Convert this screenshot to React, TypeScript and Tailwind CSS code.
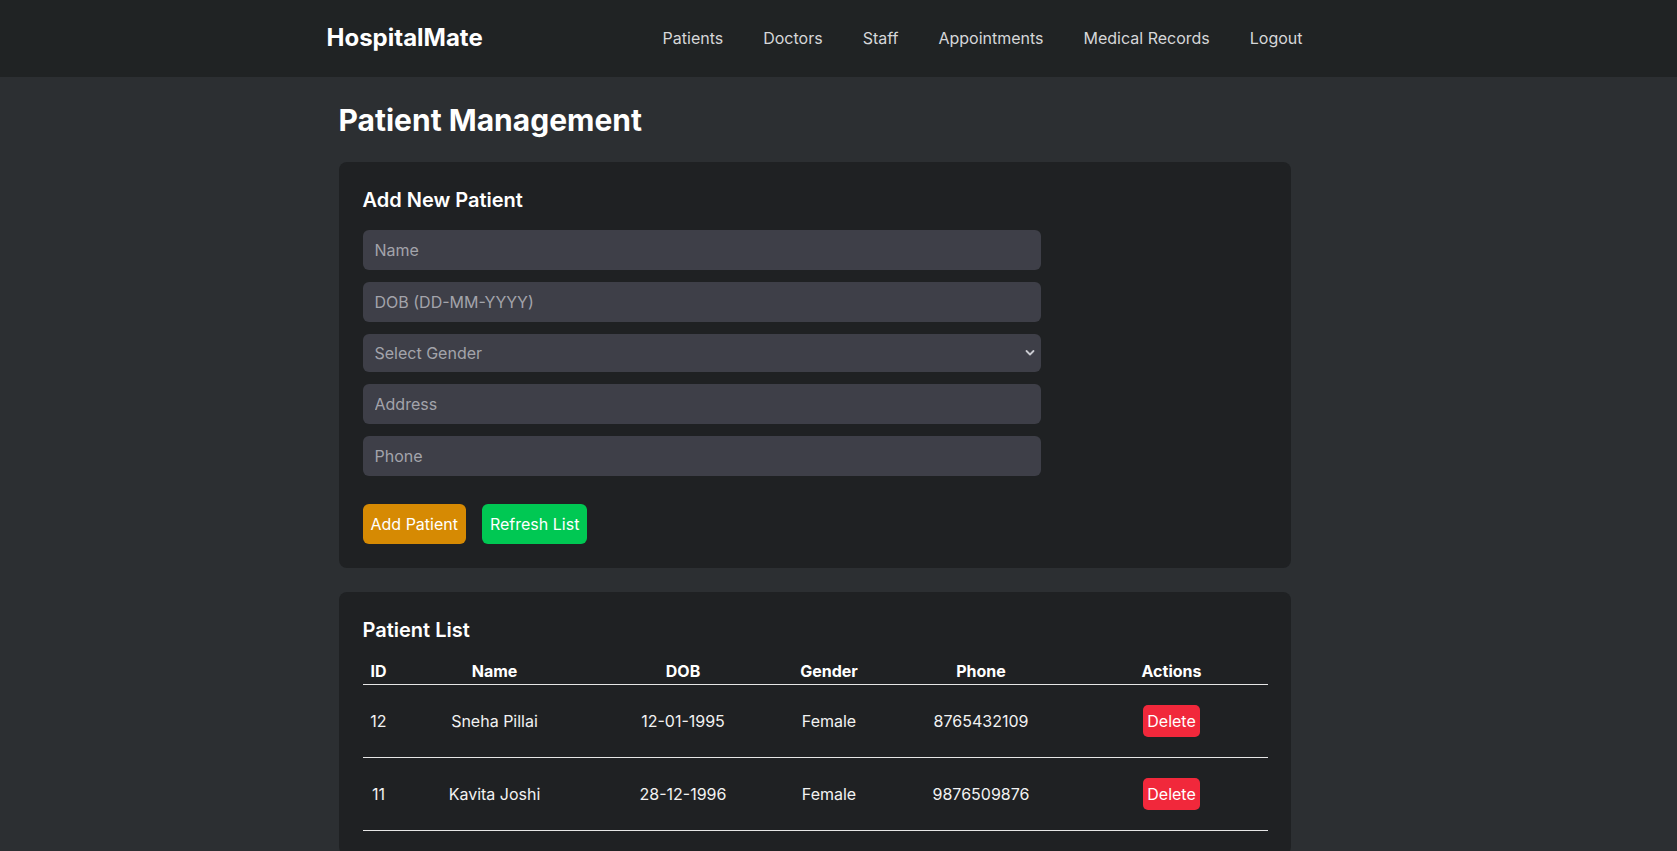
import React from "react";

const font = { fontFamily: "Inter, 'Noto Sans', sans-serif" };

const patients = [
  { id: 12, name: "Sneha Pillai", dob: "12-01-1995", gender: "Female", phone: "8765432109" },
  { id: 11, name: "Kavita Joshi", dob: "28-12-1996", gender: "Female", phone: "9876509876" },
];

function Field({ placeholder }: { placeholder: string }) {
  return (
    <input
      placeholder={placeholder}
      className="w-full h-[40px] rounded-md bg-[#3e3f48] px-3 text-[16px] text-white placeholder:text-[#a3a4ab] outline-none border-0"
    />
  );
}

export default function App() {
  return (
    <div className="min-h-[851px] bg-[#2c2f32] text-white" style={font}>
      <header className="h-[77px] bg-[#202324]">
        <div className="mx-auto w-[1024px] h-full flex items-center justify-between pr-[48px] pb-[2px]">
          <div className="text-[24px] font-bold text-white">HospitalMate</div>
          <nav className="flex items-center gap-[40px] text-[16px] text-[#d6d7d9]">
            <span>Patients</span>
            <span>Doctors</span>
            <span>Staff</span>
            <span>Appointments</span>
            <span>Medical Records</span>
            <span>Logout</span>
          </nav>
        </div>
      </header>
      <main className="mx-auto w-[1024px] pl-[12px] pt-[25px]">
        <h1 className="text-[30px] leading-[36px] font-bold mb-[24px]">Patient Management</h1>
        <section className="w-[952px] rounded-lg bg-[#1f2123] p-6">
          <h3 className="text-[20px] leading-[28px] font-semibold mb-4">Add New Patient</h3>
          <div className="w-[678px] flex flex-col gap-3">
            <Field placeholder="Name" />
            <Field placeholder="DOB (DD-MM-YYYY)" />
            <div className="relative">
              <select
                defaultValue=""
                className="w-full h-[38px] appearance-none rounded-md bg-[#3e3f48] px-3 text-[16px] text-[#a3a4ab] outline-none border-0"
              >
                <option value="">Select Gender</option>
                <option>Male</option>
                <option>Female</option>
              </select>
              <svg
                className="absolute right-[6px] top-[15px] pointer-events-none"
                width="10"
                height="8"
                viewBox="0 0 10 8"
                fill="none"
              >
                <path d="M1.5 2l3.5 3.5L8.5 2" stroke="#c9cad0" strokeWidth="1.8" strokeLinecap="round" strokeLinejoin="round" />
              </svg>
            </div>
            <Field placeholder="Address" />
            <Field placeholder="Phone" />
          </div>
          <div className="mt-[28px] flex gap-4">
            <button className="h-[40px] rounded-md bg-[#d68a03] px-2 text-[16px] text-white">Add Patient</button>
            <button className="h-[40px] rounded-md bg-[#00c853] px-2 text-[16px] text-white">Refresh List</button>
          </div>
        </section>
        <section className="mt-6 w-[952px] rounded-lg bg-[#1f2123] p-6">
          <h3 className="text-[20px] leading-[28px] font-semibold mb-2">Patient List</h3>
          <table className="w-full table-fixed border-collapse text-[16px]">
            <colgroup>
              <col className="w-[32px]" />
              <col className="w-[200px]" />
              <col className="w-[177px]" />
              <col className="w-[115px]" />
              <col className="w-[189px]" />
              <col className="w-[192px]" />
            </colgroup>
            <thead>
              <tr className="border-b border-[#e6e6e6]">
                <th className="pt-[7px] pb-[1px] leading-6 font-bold text-center">ID</th>
                <th className="pt-[7px] pb-[1px] leading-6 font-bold text-center">Name</th>
                <th className="pt-[7px] pb-[1px] leading-6 font-bold text-center">DOB</th>
                <th className="pt-[7px] pb-[1px] leading-6 font-bold text-center">Gender</th>
                <th className="pt-[7px] pb-[1px] leading-6 font-bold text-center">Phone</th>
                <th className="pt-[7px] pb-[1px] leading-6 font-bold text-center">Actions</th>
              </tr>
            </thead>
            <tbody>
              {patients.map((p) => (
                <tr key={p.id} className="border-b border-[#e6e6e6]">
                  <td className="py-5 text-center text-[#f2f2f2]">{p.id}</td>
                  <td className="py-5 text-center text-[#f2f2f2]">{p.name}</td>
                  <td className="py-5 text-center text-[#f2f2f2]">{p.dob}</td>
                  <td className="py-5 text-center text-[#f2f2f2]">{p.gender}</td>
                  <td className="py-5 text-center text-[#f2f2f2]">{p.phone}</td>
                  <td className="py-5 text-center">
                    <button className="h-[32px] rounded-[5px] bg-[#f1283b] px-1 text-[16px] text-white align-middle">Delete</button>
                  </td>
                </tr>
              ))}
            </tbody>
          </table>
        </section>
      </main>
    </div>
  );
}
